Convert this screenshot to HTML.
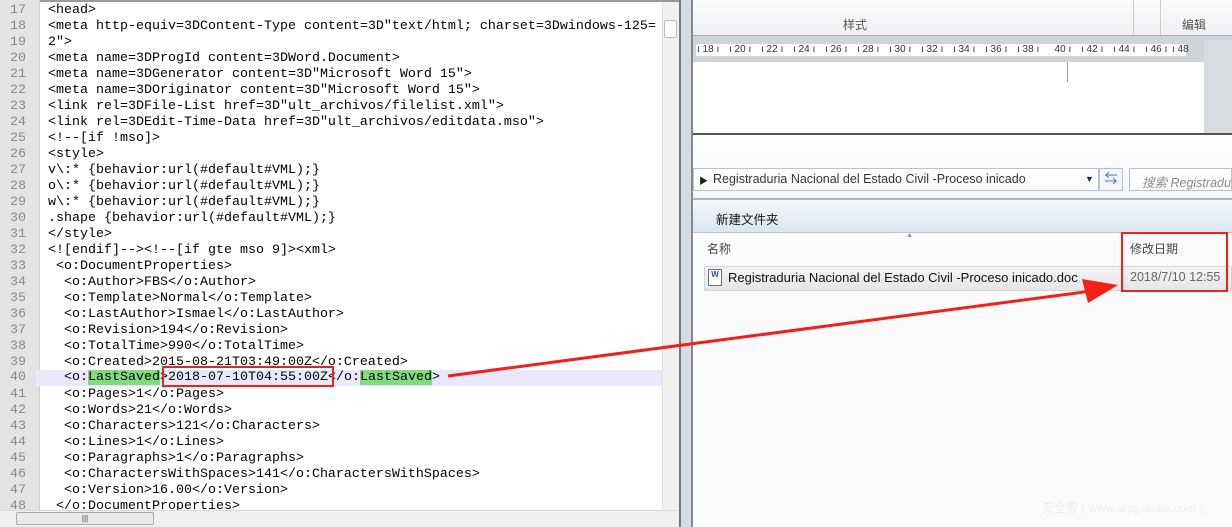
<!DOCTYPE html>
<html><head><meta charset="utf-8"><style>
*{margin:0;padding:0;box-sizing:border-box}
body{width:1232px;height:527px;overflow:hidden;background:#fff;position:relative;font-family:"Liberation Sans","Noto Sans CJK SC",sans-serif}
.abs{position:absolute}
#gut{left:0;top:0;width:40px;height:510px;background:#e4e4e4;border-right:1px solid #d0d0d0}
#code{left:0;top:1px;width:662px;height:509px;overflow:hidden}
.ln{position:absolute;left:0;height:16px;width:662px;font:13.33px/16px "Liberation Mono",monospace;white-space:pre;color:#000}
.ln .n{position:absolute;left:10px;color:#888;width:26px}
.ln .t{position:absolute;left:48px}
.hl{background:#e8e8fa}
.g{background:#7fdc7f}
.r{position:absolute;top:44px;font:10px/12px "Liberation Sans";color:#333;white-space:pre}
</style></head><body>
<div class="abs" style="left:0;top:0;width:1232px;height:2px;background:#999"></div>
<div class="abs" id="gut"></div>
<div class="abs" id="code">
<div class="ln" style="top:2px"><span class="n">17</span><span class="t">&lt;head&gt;</span></div>
<div class="ln" style="top:18px"><span class="n">18</span><span class="t">&lt;meta http-equiv=3DContent-Type content=3D"text/html; charset=3Dwindows-125=</span></div>
<div class="ln" style="top:34px"><span class="n">19</span><span class="t">2"&gt;</span></div>
<div class="ln" style="top:50px"><span class="n">20</span><span class="t">&lt;meta name=3DProgId content=3DWord.Document&gt;</span></div>
<div class="ln" style="top:66px"><span class="n">21</span><span class="t">&lt;meta name=3DGenerator content=3D"Microsoft Word 15"&gt;</span></div>
<div class="ln" style="top:82px"><span class="n">22</span><span class="t">&lt;meta name=3DOriginator content=3D"Microsoft Word 15"&gt;</span></div>
<div class="ln" style="top:98px"><span class="n">23</span><span class="t">&lt;link rel=3DFile-List href=3D"ult_archivos/filelist.xml"&gt;</span></div>
<div class="ln" style="top:114px"><span class="n">24</span><span class="t">&lt;link rel=3DEdit-Time-Data href=3D"ult_archivos/editdata.mso"&gt;</span></div>
<div class="ln" style="top:130px"><span class="n">25</span><span class="t">&lt;!--[if !mso]&gt;</span></div>
<div class="ln" style="top:146px"><span class="n">26</span><span class="t">&lt;style&gt;</span></div>
<div class="ln" style="top:162px"><span class="n">27</span><span class="t">v\:* {behavior:url(#default#VML);}</span></div>
<div class="ln" style="top:178px"><span class="n">28</span><span class="t">o\:* {behavior:url(#default#VML);}</span></div>
<div class="ln" style="top:194px"><span class="n">29</span><span class="t">w\:* {behavior:url(#default#VML);}</span></div>
<div class="ln" style="top:210px"><span class="n">30</span><span class="t">.shape {behavior:url(#default#VML);}</span></div>
<div class="ln" style="top:226px"><span class="n">31</span><span class="t">&lt;/style&gt;</span></div>
<div class="ln" style="top:242px"><span class="n">32</span><span class="t">&lt;![endif]--&gt;&lt;!--[if gte mso 9]&gt;&lt;xml&gt;</span></div>
<div class="ln" style="top:258px"><span class="n">33</span><span class="t"> &lt;o:DocumentProperties&gt;</span></div>
<div class="ln" style="top:274px"><span class="n">34</span><span class="t">  &lt;o:Author&gt;FBS&lt;/o:Author&gt;</span></div>
<div class="ln" style="top:290px"><span class="n">35</span><span class="t">  &lt;o:Template&gt;Normal&lt;/o:Template&gt;</span></div>
<div class="ln" style="top:306px"><span class="n">36</span><span class="t">  &lt;o:LastAuthor&gt;Ismael&lt;/o:LastAuthor&gt;</span></div>
<div class="ln" style="top:322px"><span class="n">37</span><span class="t">  &lt;o:Revision&gt;194&lt;/o:Revision&gt;</span></div>
<div class="ln" style="top:338px"><span class="n">38</span><span class="t">  &lt;o:TotalTime&gt;990&lt;/o:TotalTime&gt;</span></div>
<div class="ln" style="top:354px"><span class="n">39</span><span class="t">  &lt;o:Created&gt;2015-08-21T03:49:00Z&lt;/o:Created&gt;</span></div>
<div class="abs hl" style="left:36px;top:369px;width:626px;height:16px"></div>
<div class="ln" style="top:369px"><span class="n">40</span><span class="t">  &lt;o:<span class="g">LastSaved</span>&gt;2018-07-10T04:55:00Z&lt;/o:<span class="g">LastSaved</span>&gt;</span></div>
<div class="ln" style="top:386px"><span class="n">41</span><span class="t">  &lt;o:Pages&gt;1&lt;/o:Pages&gt;</span></div>
<div class="ln" style="top:402px"><span class="n">42</span><span class="t">  &lt;o:Words&gt;21&lt;/o:Words&gt;</span></div>
<div class="ln" style="top:418px"><span class="n">43</span><span class="t">  &lt;o:Characters&gt;121&lt;/o:Characters&gt;</span></div>
<div class="ln" style="top:434px"><span class="n">44</span><span class="t">  &lt;o:Lines&gt;1&lt;/o:Lines&gt;</span></div>
<div class="ln" style="top:450px"><span class="n">45</span><span class="t">  &lt;o:Paragraphs&gt;1&lt;/o:Paragraphs&gt;</span></div>
<div class="ln" style="top:466px"><span class="n">46</span><span class="t">  &lt;o:CharactersWithSpaces&gt;141&lt;/o:CharactersWithSpaces&gt;</span></div>
<div class="ln" style="top:482px"><span class="n">47</span><span class="t">  &lt;o:Version&gt;16.00&lt;/o:Version&gt;</span></div>
<div class="ln" style="top:498px"><span class="n">48</span><span class="t"> &lt;/o:DocumentProperties&gt;</span></div>
</div>
<div class="abs" style="left:662px;top:2px;width:17px;height:508px;background:#f0f0f0;border-left:1px solid #e0e0e0"></div>
<div class="abs" style="left:664px;top:20px;width:13px;height:18px;background:#fdfdfd;border:1px solid #bbb;border-radius:2px"></div>
<div class="abs" style="left:0;top:510px;width:679px;height:17px;background:#f0f0f0;border-top:1px solid #ddd"></div>
<div class="abs" style="left:16px;top:512px;width:138px;height:13px;background:#eaeaea;border:1px solid #aaa;border-radius:2px;font-size:8px;text-align:center;line-height:11px;color:#444">|||</div>
<div class="abs" style="left:679px;top:0;width:14px;height:527px;background:#d6dbe2;border-left:2px solid #777;border-right:2px solid #888"></div>
<div class="abs" style="left:693px;top:0;width:539px;height:36px;background:linear-gradient(#fafbfc,#eef0f3);border-bottom:1px solid #aab"></div>
<div class="abs" style="left:843px;top:16px;font-size:12px;color:#555">样式</div>
<div class="abs" style="left:1133px;top:0;width:1px;height:35px;background:#ccc"></div>
<div class="abs" style="left:1160px;top:0;width:1px;height:35px;background:#ccc"></div>
<div class="abs" style="left:1182px;top:16px;font-size:12px;color:#555">编辑</div>
<div class="abs" style="left:693px;top:36px;width:539px;height:26px;background:#d0d3d8"></div>
<div class="abs" style="left:696px;top:44px;width:490px;height:12px;background:#fff"></div>
<div class="r" style="left:697px">ı 18 ı</div><div class="r" style="left:729px">ı 20 ı</div><div class="r" style="left:761px">ı 22 ı</div><div class="r" style="left:793px">ı 24 ı</div><div class="r" style="left:825px">ı 26 ı</div><div class="r" style="left:857px">ı 28 ı</div><div class="r" style="left:889px">ı 30 ı</div><div class="r" style="left:921px">ı 32 ı</div><div class="r" style="left:953px">ı 34 ı</div><div class="r" style="left:985px">ı 36 ı</div><div class="r" style="left:1017px">ı 38 ı</div><div class="r" style="left:1049px">  40 ı</div><div class="r" style="left:1081px">ı 42 ı</div><div class="r" style="left:1113px">ı 44 ı</div><div class="r" style="left:1145px">ı 46 ı</div><div class="r" style="left:1172px">ı 48</div>
<div class="abs" style="left:693px;top:62px;width:511px;height:72px;background:#fff"></div>
<div class="abs" style="left:1067px;top:62px;width:1px;height:20px;background:#999"></div>
<div class="abs" style="left:1204px;top:40px;width:28px;height:94px;background:#d8dbe0"></div>
<div class="abs" style="left:693px;top:133px;width:539px;height:2px;background:#555"></div>
<div class="abs" style="left:693px;top:135px;width:539px;height:65px;background:linear-gradient(#fff,#f2f6fb)"></div>
<div class="abs" style="left:693px;top:168px;width:406px;height:23px;background:#fff;border:1px solid #b9c2cc"></div>
<div class="abs" style="left:699px;top:174px;font-size:9px;color:#222">▶</div>
<div class="abs" style="left:713px;top:172px;font-size:12.5px;color:#333">Registraduria Nacional del Estado Civil -Proceso inicado</div>
<div class="abs" style="left:1085px;top:174px;font-size:9px;color:#224">▼</div>
<div class="abs" style="left:1099px;top:168px;width:24px;height:23px;background:#f4f6f9;border:1px solid #b9c2cc;color:#2a6ed0;font-size:13px;text-align:center;line-height:20px">⇆</div>
<div class="abs" style="left:1129px;top:168px;width:103px;height:23px;background:#fff;border:1px solid #b9c2cc"></div>
<div class="abs" style="left:1142px;top:172px;font-size:12.5px;color:#888;font-style:italic;white-space:nowrap">搜索 Registradu</div>
<div class="abs" style="left:693px;top:198px;width:539px;height:2px;background:#aab4c0"></div>
<div class="abs" style="left:693px;top:200px;width:539px;height:33px;background:linear-gradient(#f4f7fb,#dce6f2);border-bottom:1px solid #b8c8da"></div>
<div class="abs" style="left:716px;top:209px;font-size:12.5px;color:#111">新建文件夹</div>
<div class="abs" style="left:693px;top:233px;width:539px;height:294px;background:#fbfbfb"></div>
<div class="abs" style="left:906px;top:232px;font-size:7px;color:#6a8">▲</div>
<div class="abs" style="left:707px;top:240px;font-size:12px;color:#444">名称</div>
<div class="abs" style="left:1130px;top:240px;font-size:12px;color:#444">修改日期</div>
<div class="abs" style="left:704px;top:266px;width:528px;height:25px;background:linear-gradient(#f4f4f4,#e6e6e6);border:1px solid #d4d4d4;border-radius:2px"></div>
<div class="abs" style="left:708px;top:269px;width:14px;height:17px;background:#fff;border:1px solid #5873a8;font:bold 8px/10px sans-serif;color:#2b4b9a;text-align:center">W</div>
<div class="abs" style="left:728px;top:270px;font-size:13px;color:#111">Registraduria Nacional del Estado Civil -Proceso inicado.doc</div>
<div class="abs" style="left:1130px;top:270px;font-size:12.5px;color:#666">2018/7/10 12:55</div>
<div class="abs" style="left:1042px;top:499px;font-size:12px;color:#eee">安全客 ( www.anquanke.com )</div>
<div class="abs" style="left:162px;top:366px;width:172px;height:21px;border:2px solid #e8241c"></div>
<div class="abs" style="left:1121px;top:232px;width:107px;height:60px;border:2.5px solid #f0201a"></div>
<svg class="abs" style="left:0;top:0" width="1232" height="527"><line x1="448" y1="376" x2="1092" y2="291" stroke="#f0201a" stroke-width="3"/><polygon points="1118,285 1082,279 1088,303" fill="#f0201a"/></svg>
</body></html>
